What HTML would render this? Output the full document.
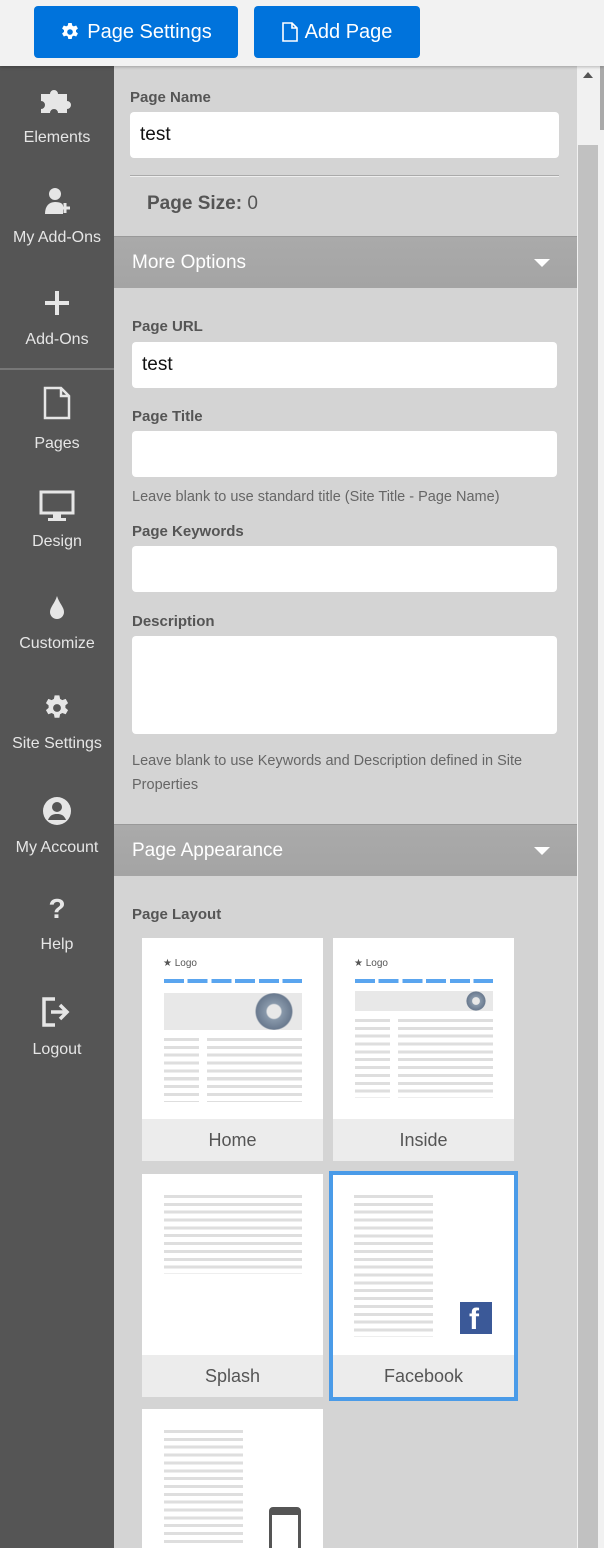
<!DOCTYPE html>
<html><head><style>
*{margin:0;padding:0;box-sizing:border-box}
html,body{width:604px;height:1548px;overflow:hidden}
body{background:#d4d4d4;font-family:"Liberation Sans",sans-serif;position:relative}
.a{position:absolute}
.top{left:0;top:0;width:604px;height:66px;background:#f2f2f2;box-shadow:0 1px 3px rgba(0,0,0,.25);z-index:3}
.btn{top:6px;height:52px;background:#0073dc;border-radius:4px;color:#fff;font-size:20px;display:flex;align-items:center;justify-content:center;gap:7px}
.side{left:0;top:66px;width:114px;height:1482px;background:#555}
.it{left:0;width:114px;text-align:center;color:#e6e6e6;font-size:16px}
.lbl{color:#555;font-size:15px;font-weight:bold}
.inp{background:#fff;border-radius:4px;height:46px;font-size:19px;padding:12px 10px;color:#111}
.hdr{left:114px;width:463px;height:52px;background:linear-gradient(#aaa,#a4a4a4);color:#fff;font-size:19px;padding:15px 18px;border-top:1px solid #999}
.hdr:after{content:"";position:absolute;right:27px;top:22px;border:8px solid transparent;border-top:8px solid #fff;border-bottom:0}
.card{background:#fff;overflow:hidden}
.cl{position:absolute;left:0;bottom:0;width:100%;height:42px;background:#ececec;color:#555;font-size:18px;text-align:center;line-height:42px}
.ln{position:absolute;background:repeating-linear-gradient(#dedede 0 3px,transparent 3px 7.85px)}
.help{color:#666;font-size:14.5px;line-height:24px}
</style></head><body>
<div class="a top">
 <div class="a btn" style="left:34px;width:204px"><svg width="20" height="20" viewBox="0 0 20 20"><path fill="#fff" d="M8.3 1h3.4l.5 2.5 1.6.9 2.4-.9 1.7 3-1.9 1.6v1.8l1.9 1.6-1.7 3-2.4-.9-1.6.9-.5 2.5H8.3l-.5-2.5-1.6-.9-2.4.9-1.7-3 1.9-1.6V8.1L2.1 6.5l1.7-3 2.4.9 1.6-.9z"/><circle cx="10" cy="10" r="2.8" fill="#0073dc"/></svg>Page Settings</div>
 <div class="a btn" style="left:254px;width:166px"><svg width="16" height="20" viewBox="0 0 16 20"><path fill="none" stroke="#fff" stroke-width="1.6" d="M1 1h9l5 5v13H1zM10 1v5h5"/></svg>Add Page</div>
</div>
<div class="a side"></div>
<div class="a" style="left:0;top:368px;width:114px;height:2px;background:#777"></div>
<div class="a it" style="top:86px"><svg width="40" height="28" viewBox="0 0 40 28"><path fill="#e6e6e6" d="M4 8h9a4 4 0 1 1 8 0h9v7a4 4 0 1 1 0 8v4H21a4 4 0 1 0-8 0H4v-4a4 4 0 1 0 0-8z"/></svg><div style="margin-top:10px">Elements</div></div>
<div class="a it" style="top:186px"><svg width="30" height="30" viewBox="0 0 30 30"><circle cx="13" cy="8" r="6" fill="#e6e6e6"/><path d="M3 28c0-8 4-12 10-12s8 2 8 4v8z" fill="#e6e6e6"/><path d="M23 17v10M18 22h10" stroke="#e6e6e6" stroke-width="3"/></svg><div style="margin-top:8px">My Add-Ons</div></div>
<div class="a it" style="top:290px"><svg width="26" height="26"><path d="M13 1v24M1 13h24" stroke="#e6e6e6" stroke-width="4"/></svg><div style="margin-top:10px">Add-Ons</div></div>
<div class="a it" style="top:386px"><svg width="28" height="34" viewBox="0 0 28 34"><path fill="none" stroke="#e6e6e6" stroke-width="2.5" d="M2 2h16l8 8v22H2zM18 2v8h8"/></svg><div style="margin-top:10px">Pages</div></div>
<div class="a it" style="top:490px"><svg width="36" height="32"><rect x="2" y="2" width="32" height="21" fill="none" stroke="#e6e6e6" stroke-width="3"/><rect x="14" y="23" width="8" height="5" fill="#e6e6e6"/><rect x="9" y="28" width="18" height="3" fill="#e6e6e6"/></svg><div style="margin-top:6px">Design</div></div>
<div class="a it" style="top:594px"><svg width="20" height="28"><path d="M10 2C8 9 3 13 3 18a7 7 0 0 0 14 0c0-5-5-9-7-16z" fill="#e6e6e6"/></svg><div style="margin-top:8px">Customize</div></div>
<div class="a it" style="top:694px"><svg width="28" height="28" viewBox="0 0 20 20"><path fill="#e6e6e6" d="M8.3 1h3.4l.5 2.5 1.6.9 2.4-.9 1.7 3-1.9 1.6v1.8l1.9 1.6-1.7 3-2.4-.9-1.6.9-.5 2.5H8.3l-.5-2.5-1.6-.9-2.4.9-1.7-3 1.9-1.6V8.1L2.1 6.5l1.7-3 2.4.9 1.6-.9z"/><circle cx="10" cy="10" r="2.8" fill="#555"/></svg><div style="margin-top:8px">Site Settings</div></div>
<div class="a it" style="top:796px"><svg width="30" height="30"><circle cx="15" cy="15" r="14" fill="#e6e6e6"/><circle cx="15" cy="11" r="5" fill="#555"/><path d="M6 24c2-5 5-6 9-6s7 1 9 6" fill="#555"/></svg><div style="margin-top:8px">My Account</div></div>
<div class="a it" style="top:894px"><div style="font-size:28px;font-weight:bold;height:30px;line-height:30px">?</div><div style="margin-top:12px">Help</div></div>
<div class="a it" style="top:996px"><svg width="32" height="32"><path d="M14 3H3v26h11" fill="none" stroke="#e6e6e6" stroke-width="3.5"/><path d="M10 16h14M19 9l7 7-7 7" fill="none" stroke="#e6e6e6" stroke-width="3.5"/></svg><div style="margin-top:8px">Logout</div></div>

<div class="a" style="left:577px;top:66px;width:27px;height:1482px;background:#f1f1f1"></div>
<div class="a" style="left:578px;top:145px;width:20px;height:1403px;background:#c1c1c1"></div>
<div class="a" style="left:600px;top:66px;width:4px;height:64px;background:#aaa"></div>
<div class="a" style="left:583px;top:72px;border:5px solid transparent;border-bottom:6px solid #555;border-top:0"></div>

<div class="a lbl" style="left:130px;top:89px">Page Name</div>
<div class="a inp" style="left:130px;top:112px;width:429px">test</div>
<div class="a" style="left:130px;top:175px;width:429px;height:2px;background:#aaa;border-bottom:1px solid #eee"></div>
<div class="a" style="left:147px;top:193px;font-size:19px;color:#555"><b>Page Size:</b> 0</div>
<div class="a hdr" style="top:236px">More Options</div>
<div class="a lbl" style="left:132px;top:318px">Page URL</div>
<div class="a inp" style="left:132px;top:342px;width:425px">test</div>
<div class="a lbl" style="left:132px;top:408px">Page Title</div>
<div class="a inp" style="left:132px;top:431px;width:425px"></div>
<div class="a help" style="left:132px;top:485px">Leave blank to use standard title (Site Title - Page Name)</div>
<div class="a lbl" style="left:132px;top:523px">Page Keywords</div>
<div class="a inp" style="left:132px;top:546px;width:425px"></div>
<div class="a lbl" style="left:132px;top:613px">Description</div>
<div class="a inp" style="left:132px;top:636px;width:425px;height:98px"></div>
<div class="a help" style="left:132px;top:749px;width:405px">Leave blank to use Keywords and Description defined in Site Properties</div>
<div class="a hdr" style="top:824px">Page Appearance</div>
<div class="a lbl" style="left:132px;top:906px">Page Layout</div>

<div class="a card" style="left:142px;top:938px;width:181px;height:223px">
 <div class="a" style="left:21px;top:20px;font-size:10px;color:#555">★ Logo</div>
 <div class="a" style="left:22px;top:41px;width:138px;height:4px;background:repeating-linear-gradient(90deg,#5aa5ef 0 20px,transparent 20px 23.7px)"></div>
 <div class="a" style="left:22px;top:55px;width:138px;height:37px;background:#e8e8e8"></div>
 <div class="a" style="left:112px;top:55px;width:40px;height:37px;border-radius:50%;background:radial-gradient(circle,#e8e8e8 25%,#8898aa 30%,#6a7a8f 65%,transparent 70%)"></div>
 <div class="ln" style="left:22px;top:100px;width:35px;height:64px"></div>
 <div class="ln" style="left:65px;top:100px;width:95px;height:64px"></div>
 <div class="cl">Home</div>
</div>
<div class="a card" style="left:333px;top:938px;width:181px;height:223px">
 <div class="a" style="left:21px;top:20px;font-size:10px;color:#555">★ Logo</div>
 <div class="a" style="left:22px;top:41px;width:138px;height:4px;background:repeating-linear-gradient(90deg,#5aa5ef 0 20px,transparent 20px 23.7px)"></div>
 <div class="a" style="left:22px;top:53px;width:138px;height:20px;background:#e8e8e8"></div>
 <div class="a" style="left:133px;top:53px;width:20px;height:20px;border-radius:50%;background:radial-gradient(circle,#e8e8e8 25%,#8898aa 30%,#6a7a8f 65%,transparent 70%)"></div>
 <div class="ln" style="left:22px;top:81px;width:35px;height:79px"></div>
 <div class="ln" style="left:65px;top:81px;width:95px;height:79px"></div>
 <div class="cl">Inside</div>
</div>
<div class="a card" style="left:142px;top:1174px;width:181px;height:223px">
 <div class="ln" style="left:22px;top:21px;width:138px;height:79px"></div>
 <div class="cl">Splash</div>
</div>
<div class="a card" style="left:329px;top:1171px;width:189px;height:230px;border:4px solid #4a9be8">
 <div class="ln" style="left:21px;top:20px;width:79px;height:142px"></div>
 <div class="a" style="left:127px;top:127px;width:32px;height:32px;background:#3b5998"></div>
 <div class="a" style="left:136px;top:127px;color:#fff;font-size:30px;font-weight:bold;line-height:36px">f</div>
 <div class="cl" style="height:42px">Facebook</div>
</div>
<div class="a card" style="left:142px;top:1409px;width:181px;height:139px">
 <div class="ln" style="left:22px;top:21px;width:79px;height:120px"></div>
 <div class="a" style="left:127px;top:98px;width:32px;height:50px;border:3px solid #555;border-top-width:8px;border-radius:4px"></div>
</div>
</body></html>
